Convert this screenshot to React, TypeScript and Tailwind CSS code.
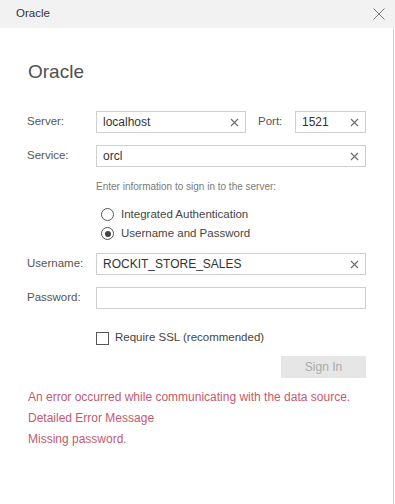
import React from 'react'

const ClearIcon = () => (
  <svg width="9" height="9" viewBox="0 0 9 9" className="shrink-0">
    <path d="M1 1 L8 8 M8 1 L1 8" stroke="#6b6b6b" strokeWidth="1.1" />
  </svg>
)

interface TextBoxProps {
  value?: string
  width: string
  clear?: boolean
}

const TextBox = ({ value, width, clear = true }: TextBoxProps) => (
  <div className={`${width} h-[22px] flex items-center justify-between border border-[#cfcfcf] pl-[6px] pr-[6px] bg-white`}>
    <span className="text-[12px] text-[#333]">{value}</span>
    {clear && value ? <ClearIcon /> : null}
  </div>
)

const Label = ({ children }: { children: React.ReactNode }) => (
  <div className="w-[69px] shrink-0 text-[11.5px] text-[#555]">{children}</div>
)

const Radio = ({ checked, label }: { checked?: boolean; label: string }) => (
  <div className="h-[19px] flex items-center pl-[5px]">
    <div className="w-[13px] h-[13px] rounded-full border border-[#555] flex items-center justify-center">
      {checked && <div className="w-[6px] h-[6px] rounded-full bg-[#444]" />}
    </div>
    <span className="ml-[7px] text-[11.5px] text-[#444]">{label}</span>
  </div>
)

export default function App() {
  return (
    <div className="w-[395px] h-[504px] bg-white font-['Liberation_Sans',Arial,sans-serif]">
      {/* Title bar */}
      <div className="h-[28px] bg-[#f2f2f2] flex items-center justify-between pl-[16px] pr-[9px]">
        <span className="text-[11.5px] text-[#333]">Oracle</span>
        <svg width="14" height="14" viewBox="0 0 14 14">
          <path d="M1.5 1.5 L12.5 12.5 M12.5 1.5 L1.5 12.5" stroke="#7a7a7a" strokeWidth="1" />
        </svg>
      </div>

      <div className="w-[394px] h-[476px] border-r border-[#d0d0d0] pl-[27px] flex flex-col">
        <h1 className="mt-[32px] h-[24px] leading-[24px] text-[19px] text-[#505050] font-normal pl-[1px]">Oracle</h1>

        {/* Server / Port */}
        <div className="mt-[27px] flex items-center">
          <Label>Server:</Label>
          <TextBox value="localhost" width="w-[150px]" />
          <span className="ml-[12px] w-[37px] text-[11.5px] text-[#555]">Port:</span>
          <TextBox value="1521" width="w-[71px]" />
        </div>

        <div className="mt-[12px] flex items-center">
          <Label>Service:</Label>
          <TextBox value="orcl" width="w-[270px]" />
        </div>

        <div className="mt-[13px] ml-[69px] h-[14px] leading-[14px] text-[10px] text-[#7a7a7a]">
          Enter information to sign in to the server:
        </div>

        <div className="mt-[11px] ml-[69px] flex flex-col">
          <Radio label="Integrated Authentication" />
          <Radio checked label="Username and Password" />
        </div>

        <div className="mt-[10px] flex items-center">
          <Label>Username:</Label>
          <TextBox value="ROCKIT_STORE_SALES" width="w-[270px]" />
        </div>

        <div className="mt-[12px] flex items-center">
          <Label>Password:</Label>
          <TextBox width="w-[270px]" />
        </div>

        <div className="mt-[21px] ml-[69px] h-[16px] flex items-center">
          <div className="w-[13px] h-[13px] border border-[#555] bg-white" />
          <span className="ml-[6px] text-[11.5px] text-[#444]">Require SSL (recommended)</span>
        </div>

        <div className="mt-[10px] ml-[254px] w-[85px] h-[22px] bg-[#e6e6e6] flex items-center justify-center text-[12px] text-[#aaa]">
          Sign In
        </div>

        <div className="mt-[9px] pl-[1px] flex flex-col text-[12px] leading-[21px] text-[#c45a6f]">
          <span>An error occurred while communicating with the data source.</span>
          <span>Detailed Error Message</span>
          <span>Missing password.</span>
        </div>
      </div>
    </div>
  )
}
